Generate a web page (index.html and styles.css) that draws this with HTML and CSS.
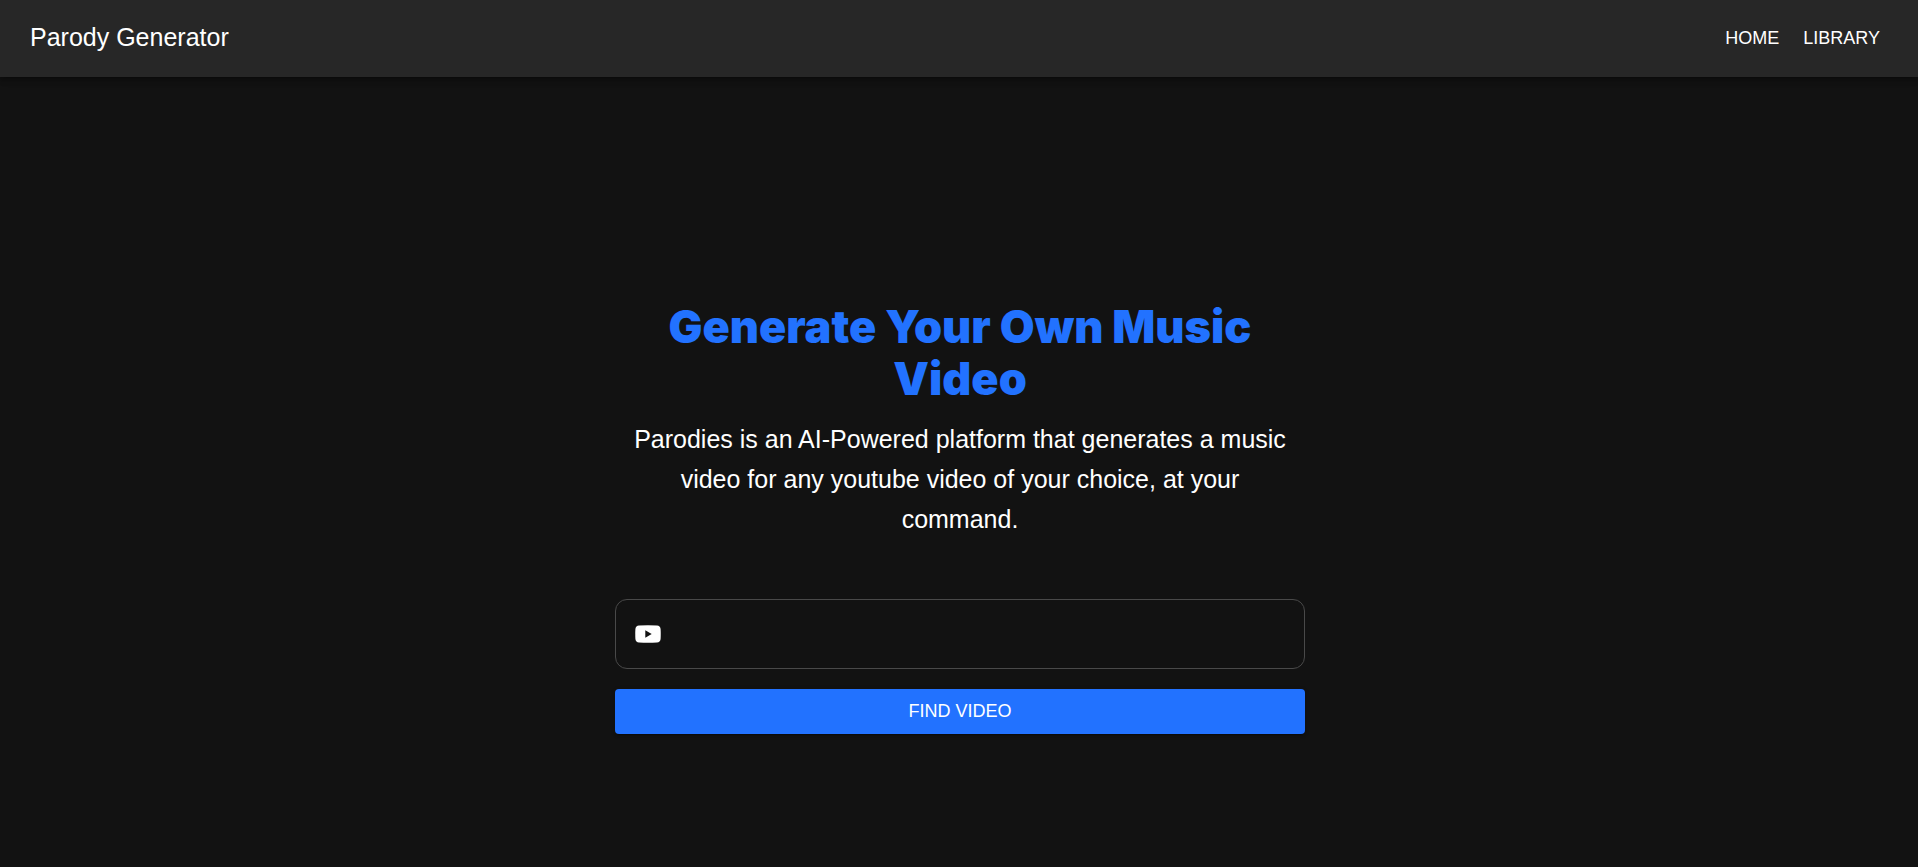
FILE: index.html
```html
<!DOCTYPE html>
<html lang="en">
<head>
<meta charset="utf-8">
<meta name="viewport" content="width=device-width, initial-scale=1">
<title>Parody Generator</title>
<link rel="stylesheet" href="styles.css">
</head>
<body>
<header class="app-bar">
  <a class="brand" href="#">Parody Generator</a>
  <nav class="nav">
    <a class="nav-link" href="#">HOME</a>
    <a class="nav-link" href="#library">LIBRARY</a>
  </nav>
</header>
<main class="main">
  <section class="hero">
    <h1 class="hero-title">Generate Your Own Music Video</h1>
    <p class="hero-text">Parodies is an AI-Powered platform that generates a music video for any youtube video of your choice, at your command.</p>
    <form class="search">
      <label class="field">
        <svg class="field-icon" viewBox="0 0 26 18" aria-hidden="true">
          <path fill="#fff" fill-rule="evenodd" d="M4 .4Q13-.1 22 .4Q25.200 .6 25.600 4Q25.900 9 25.600 14Q25.200 17.400 22 17.600Q13 18.100 4 17.600Q.8 17.400 .4 14Q.1 9 .4 4Q.8 .6 4 .4ZM10.300 5.300V12.700L16.700 9Z"/>
        </svg>
        <input class="field-input" type="text" aria-label="YouTube video">
      </label>
      <button class="submit" type="submit">FIND VIDEO</button>
    </form>
  </section>
</main>
</body>
</html>
```
FILE: styles.css
```css
* {
  box-sizing: border-box;
}

body {
  margin: 0;
  min-height: 100vh;
  display: flex;
  flex-direction: column;
  background: #121212;
  color: #fff;
  font-family: "Liberation Sans", Arial, sans-serif;
}

.app-bar {
  display: flex;
  align-items: center;
  justify-content: space-between;
  padding: 18px 38px 20px 30px;
  background: #272727;
  box-shadow: 0 2px 4px -1px rgba(0, 0, 0, 0.2), 0 4px 5px rgba(0, 0, 0, 0.14), 0 1px 10px rgba(0, 0, 0, 0.12);
}

.brand {
  color: inherit;
  font-size: 25px;
  line-height: 39px;
  text-decoration: none;
}

.nav {
  display: flex;
  gap: 24px;
}

.nav-link {
  color: inherit;
  font-size: 18px;
  line-height: 32px;
  text-decoration: none;
}

.main {
  display: flex;
  justify-content: center;
  padding: 224px 16px 40px 18px;
}

.hero {
  width: 100%;
  max-width: 690px;
  text-align: center;
}

.hero-title {
  margin: 0;
  color: #2272ff;
  font-family: Inter, "Liberation Sans", sans-serif;
  font-size: 45px;
  font-weight: 900;
  line-height: 52px;
}

.hero-text {
  margin: 0;
  padding: 14px 12px 60px;
  font-size: 25px;
  line-height: 40px;
}

.search {
  display: flex;
  flex-direction: column;
  gap: 20px;
}

.field {
  display: flex;
  align-items: center;
  gap: 14px;
  height: 70px;
  padding: 0 19px;
  border: 1px solid #494949;
  border-radius: 12px;
}

.field-icon {
  width: 26px;
  height: 18px;
}

.field-input {
  flex: 1;
  min-width: 0;
  border: 0;
  outline: 0;
  background: transparent;
  color: inherit;
  font: inherit;
  font-size: 18px;
}

.submit {
  height: 45px;
  border: 0;
  border-radius: 4px;
  background: #2272ff;
  color: #fff;
  font-family: inherit;
  font-size: 18px;
  box-shadow: 0 3px 1px -2px rgba(0, 0, 0, 0.2), 0 2px 2px rgba(0, 0, 0, 0.14), 0 1px 5px rgba(0, 0, 0, 0.12);
}
```
